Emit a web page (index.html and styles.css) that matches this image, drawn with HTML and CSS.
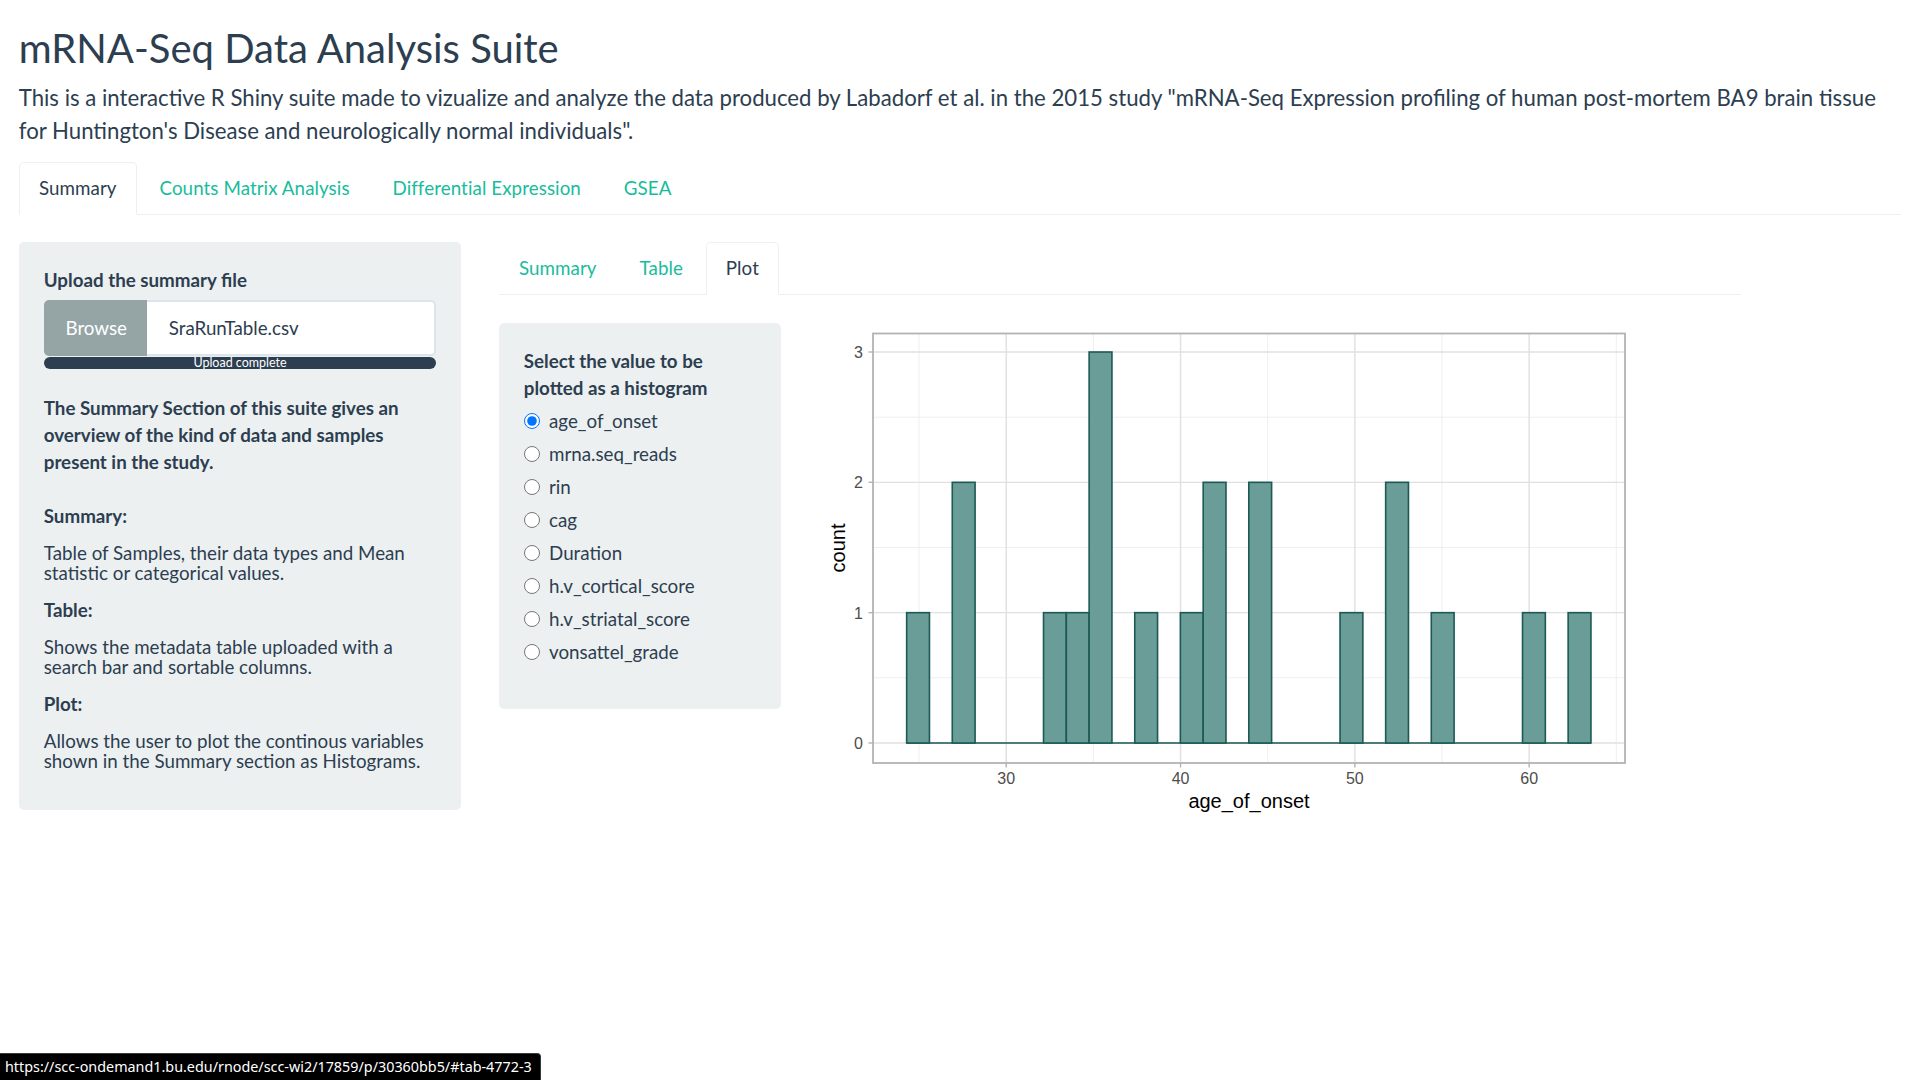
FILE: index.html
```html
<!DOCTYPE html>
<html lang="en">
<head>
<meta charset="utf-8">
<title>mRNA-Seq Data Analysis Suite</title>
<link rel="stylesheet" href="styles.css">
</head>
<body>
<div class="container">
  <h2 class="title">mRNA-Seq Data Analysis Suite</h2>
  <p class="intro">This is a interactive R Shiny suite made to vizualize and analyze the data produced by Labadorf et al. in the 2015 study "mRNA-Seq Expression profiling of human post-mortem BA9 brain tissue for Huntington's Disease and neurologically normal individuals".</p>

  <ul class="nav-tabs">
    <li class="active"><a>Summary</a></li>
    <li><a>Counts Matrix Analysis</a></li>
    <li><a>Differential Expression</a></li>
    <li><a>GSEA</a></li>
  </ul>

  <div class="row outer-row">
    <div class="col3">
      <div class="well side-well">
        <div class="label">Upload the summary file</div>
        <div class="input-group">
          <span class="btn-browse">Browse</span>
          <span class="file-name">SraRunTable.csv</span>
        </div>
        <div class="progress"><span>Upload complete</span></div>
        <p class="lead-bold">The Summary Section of this suite gives an overview of the kind of data and samples present in the study.</p>
        <h5 class="sec-head">Summary:</h5>
        <p class="desc">Table of Samples, their data types and Mean statistic or categorical values.</p>
        <h5 class="sec-head">Table:</h5>
        <p class="desc">Shows the metadata table uploaded with a search bar and sortable columns.</p>
        <h5 class="sec-head">Plot:</h5>
        <p class="desc">Allows the user to plot the continous variables shown in the Summary section as Histograms.</p>
      </div>
    </div>

    <div class="col8">
      <ul class="nav-tabs sub-tabs">
        <li><a>Summary</a></li>
        <li><a>Table</a></li>
        <li class="active"><a>Plot</a></li>
      </ul>
      <div class="row inner-row">
        <div class="col3">
          <div class="well radio-well">
            <div class="label">Select the value to be plotted as a histogram</div>
            <div class="radio-group">
              <label class="radio"><input type="radio" name="v" checked><span>age_of_onset</span></label>
              <label class="radio"><input type="radio" name="v"><span>mrna.seq_reads</span></label>
              <label class="radio"><input type="radio" name="v"><span>rin</span></label>
              <label class="radio"><input type="radio" name="v"><span>cag</span></label>
              <label class="radio"><input type="radio" name="v"><span>Duration</span></label>
              <label class="radio"><input type="radio" name="v"><span>h.v_cortical_score</span></label>
              <label class="radio"><input type="radio" name="v"><span>h.v_striatal_score</span></label>
              <label class="radio"><input type="radio" name="v"><span>vonsattel_grade</span></label>
            </div>
          </div>
        </div>
        <div class="col8">
          <svg class="plot" width="816" height="500" viewBox="0 0 816 500" xmlns="http://www.w3.org/2000/svg">
            <rect x="0" y="0" width="816" height="500" fill="#ffffff"/>
            <!-- minor grid -->
            <g stroke="#ededed" stroke-width="0.9">
              <line x1="54" y1="354.8" x2="806" y2="354.8"/>
              <line x1="54" y1="224.5" x2="806" y2="224.5"/>
              <line x1="54" y1="94.2" x2="806" y2="94.2"/>
              <line x1="100.1" y1="10.5" x2="100.1" y2="440"/>
              <line x1="274.4" y1="10.5" x2="274.4" y2="440"/>
              <line x1="448.7" y1="10.5" x2="448.7" y2="440"/>
              <line x1="623" y1="10.5" x2="623" y2="440"/>
              <line x1="797.3" y1="10.5" x2="797.3" y2="440"/>
            </g>
            <!-- major grid -->
            <g stroke="#e0e0e0" stroke-width="1.4">
              <line x1="54" y1="420" x2="806" y2="420"/>
              <line x1="54" y1="289.67" x2="806" y2="289.67"/>
              <line x1="54" y1="159.33" x2="806" y2="159.33"/>
              <line x1="54" y1="29" x2="806" y2="29"/>
              <line x1="187.25" y1="10.5" x2="187.25" y2="440"/>
              <line x1="361.55" y1="10.5" x2="361.55" y2="440"/>
              <line x1="535.85" y1="10.5" x2="535.85" y2="440"/>
              <line x1="710.15" y1="10.5" x2="710.15" y2="440"/>
            </g>
            <!-- bars -->
            <g fill="#6a9c98" stroke="#1b5a55" stroke-width="1.6">
              <line x1="87.65" y1="420" x2="771.96" y2="420"/>
              <rect x="87.65" y="289.67" width="22.81" height="130.33"/>
              <rect x="133.27" y="159.33" width="22.81" height="260.67"/>
              <rect x="224.51" y="289.67" width="22.81" height="130.33"/>
              <rect x="247.32" y="289.67" width="22.81" height="130.33"/>
              <rect x="270.13" y="29" width="22.81" height="391"/>
              <rect x="315.75" y="289.67" width="22.81" height="130.33"/>
              <rect x="361.37" y="289.67" width="22.81" height="130.33"/>
              <rect x="384.18" y="159.33" width="22.81" height="260.67"/>
              <rect x="429.80" y="159.33" width="22.81" height="260.67"/>
              <rect x="521.04" y="289.67" width="22.81" height="130.33"/>
              <rect x="566.66" y="159.33" width="22.81" height="260.67"/>
              <rect x="612.28" y="289.67" width="22.81" height="130.33"/>
              <rect x="703.52" y="289.67" width="22.81" height="130.33"/>
              <rect x="749.14" y="289.67" width="22.81" height="130.33"/>
            </g>
            <!-- panel border -->
            <rect x="54" y="10.5" width="752" height="429.5" fill="none" stroke="#b3b3b3" stroke-width="1.8"/>
            <!-- ticks -->
            <g stroke="#b3b3b3" stroke-width="1.4">
              <line x1="49.5" y1="420" x2="54" y2="420"/>
              <line x1="49.5" y1="289.67" x2="54" y2="289.67"/>
              <line x1="49.5" y1="159.33" x2="54" y2="159.33"/>
              <line x1="49.5" y1="29" x2="54" y2="29"/>
              <line x1="187.25" y1="440" x2="187.25" y2="444.5"/>
              <line x1="361.55" y1="440" x2="361.55" y2="444.5"/>
              <line x1="535.85" y1="440" x2="535.85" y2="444.5"/>
              <line x1="710.15" y1="440" x2="710.15" y2="444.5"/>
            </g>
            <g class="tick-text" text-anchor="end">
              <text x="44" y="425.8">0</text>
              <text x="44" y="295.5">1</text>
              <text x="44" y="165.1">2</text>
              <text x="44" y="34.8">3</text>
            </g>
            <g class="tick-text" text-anchor="middle">
              <text x="187.25" y="461">30</text>
              <text x="361.55" y="461">40</text>
              <text x="535.85" y="461">50</text>
              <text x="710.15" y="461">60</text>
            </g>
            <text class="axis-title" x="430" y="485" text-anchor="middle">age_of_onset</text>
            <text class="axis-title" transform="translate(26,225) rotate(-90)" text-anchor="middle">count</text>
          </svg>
        </div>
      </div>
    </div>
  </div>
</div>

<div class="status-bubble">https://scc-ondemand1.bu.edu/rnode/scc-wi2/17859/p/30360bb5/#tab-4772-3</div>
</body>
</html>
```

FILE: styles.css
```css
* { box-sizing: border-box; }

html, body {
  margin: 0;
  padding: 0;
  background: #ffffff;
}

body {
  font-family: Lato, "Noto Sans", sans-serif;
  font-size: 18.75px;
  line-height: 26.8px;
  color: #2c3e50;
}

.container {
  padding: 0 18.75px;
}

.title {
  font-size: 40px;
  line-height: 44px;
  font-weight: 400;
  margin: 25.8px 0 11.2px;
}

.intro {
  font-size: 22.2px;
  line-height: 33px;
  margin: 0 0 14.7px;
}

.nav-tabs {
  display: flex;
  list-style: none;
  margin: 0;
  padding: 0;
  border-bottom: 1px solid #ecf0f1;
}

.nav-tabs li a {
  display: block;
  padding: 12.3px 19.2px;
  line-height: 26.8px;
  border: 1px solid transparent;
  border-radius: 5px 5px 0 0;
  margin-right: 2.5px;
  margin-bottom: -1px;
  color: #18bc9c;
  letter-spacing: 0.08px;
}

.nav-tabs li.active a {
  color: #2c3e50;
  background: #ffffff;
  border-color: #ecf0f1;
  border-bottom-color: #ffffff;
}

.row {
  display: flex;
  align-items: flex-start;
  margin: 0 -18.75px;
}

.outer-row { margin-top: 27px; }

.inner-row { margin-top: 28px; }

.col3 {
  width: 25%;
  padding: 0 18.75px;
  flex: none;
}

.col8 {
  width: 66.6667%;
  padding: 0 18.75px;
  flex: none;
}

.well {
  background: #ecf0f1;
  border-radius: 5px;
  padding: 25px;
}

.label {
  font-weight: 700;
  margin-bottom: 6.25px;
}

.input-group {
  display: flex;
  height: 56px;
}

.btn-browse {
  width: 103px;
  flex: none;
  background: #95a5a6;
  color: #ffffff;
  border-radius: 5px 0 0 5px;
  display: flex;
  align-items: center;
  justify-content: center;
  padding-left: 2px;
}

.file-name {
  flex: 1;
  background: #ffffff;
  border: 2.5px solid #dce4ec;
  border-left: none;
  border-radius: 0 5px 5px 0;
  display: flex;
  align-items: center;
  padding-left: 22px;
}

.progress {
  margin-top: 1px;
  height: 12px;
  background: #2c3e50;
  border-radius: 6px;
  color: #ffffff;
  font-size: 12.5px;
  line-height: 12px;
  text-align: center;
  overflow: visible;
}

.lead-bold {
  font-weight: 700;
  line-height: 27px;
  margin: 24.5px 0 0;
}

.sec-head {
  font-size: 18.75px;
  font-weight: 700;
  line-height: 20px;
  margin: 31px 0 17px;
}

.sec-head + .desc + .sec-head { margin-top: 0; }

.desc {
  line-height: 20px;
  margin: 0 0 17px;
}

.desc:last-child { margin-bottom: 14px; }

.radio-well .label {
  line-height: 27px;
  margin-top: -1px;
}

.radio-group {
  display: flex;
  flex-direction: column;
  gap: 6.25px;
  padding-bottom: 18.5px;
}

.radio {
  display: flex;
  align-items: center;
  line-height: 26.8px;
  height: 26.8px;
}

.radio input {
  width: 16px;
  height: 16px;
  margin: 0 9.3px 0 0;
  flex: none;
}

.plot {
  display: block;
}

.tick-text text {
  font-family: "Liberation Sans", Arial, sans-serif;
  font-size: 16px;
  fill: #4d4d4d;
}

.axis-title {
  font-family: "Liberation Sans", Arial, sans-serif;
  font-size: 20px;
  fill: #000000;
}

.status-bubble {
  position: fixed;
  left: 0;
  bottom: 0;
  width: 541px;
  height: 27px;
  background: #000000;
  color: #ffffff;
  border-top: 1px solid #3a3a3a;
  border-right: 1px solid #3a3a3a;
  border-top-right-radius: 4px;
  font-family: "Noto Sans", "Open Sans", sans-serif;
  font-size: 14.35px;
  line-height: 25px;
  padding-left: 5px;
  white-space: nowrap;
  overflow: hidden;
}
```
